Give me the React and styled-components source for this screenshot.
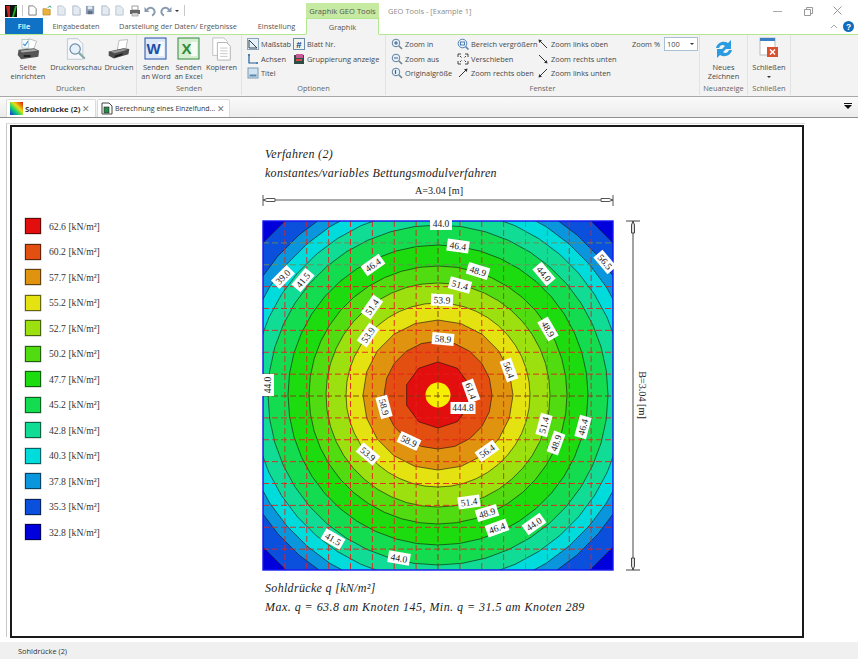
import React from "react";
import styled, { createGlobalStyle } from "styled-components";

const GlobalStyle = createGlobalStyle`
	html, body {
		margin: 0;
		padding: 0;
		background: #fff;
	}
	body {
		font-family: "Open Sans", "Liberation Sans", sans-serif;
		font-size: 7.4px;
		color: #484848;
	}
`;

const Page = styled.div`
	width: 858px;
	height: 659px;
	display: flex;
	flex-direction: column;
	overflow: hidden;
	background: #fff;
`;

/* title bar */
const TitleBar = styled.div`
	height: 18px;
	display: flex;
	align-items: stretch;
	padding-left: 5px;
`;

const QuickAccess = styled.div`
	width: 301px;
	display: flex;
	align-items: center;
	gap: 3.5px;
	padding-top: 3px;
	box-sizing: border-box;
`;

const QatSeparator = styled.span`
	width: 1px;
	height: 11px;
	margin: 0 ${p => p.$m}px;
	background: #c8c8c8;
`;

const ContextHeader = styled.div`
	width: 73px;
	margin-top: 3px;
	background: #c6eaa2;
	display: flex;
	align-items: center;
	justify-content: center;
	font-size: 7.6px;
	color: #555;
`;

const AppTitle = styled.div`
	margin-left: 9px;
	padding-top: 4px;
	width: 384px;
	display: flex;
	align-items: center;
	font-size: 7.5px;
	color: #8c8c8c;
`;

const WindowButtons = styled.div`
	display: flex;
	align-items: center;
	gap: 18px;
	padding-top: 3px;
`;

/* ribbon tabs */
const TabRow = styled.div`
	height: 16px;
	display: flex;
	align-items: stretch;
	padding-left: 5px;
	border-bottom: 1px solid #b4e88e;
	position: relative;
`;

const FileTab = styled.div`
	width: 38px;
	background: #0f72c4;
	color: #fff;
	font-weight: 600;
	display: flex;
	align-items: center;
	justify-content: center;
`;

const RibbonTab = styled.div`
	width: ${p => p.$w}px;
	display: flex;
	align-items: center;
	justify-content: center;
	color: #555;
	${p =>
		p.$active &&
		`
		background: #f3f3f3;
		border: 1px solid #b4e88e;
		border-bottom: 1px solid #f3f3f3;
		margin-bottom: -1px;
		box-sizing: border-box;
	`}
`;

const HelpArea = styled.div`
	margin-left: auto;
	display: flex;
	align-items: center;
	gap: 5px;
	padding-right: 4px;
`;

/* ribbon body */
const Ribbon = styled.div`
	height: 61px;
	background: #f3f3f3;
	display: flex;
	padding-left: 5px;
	border-bottom: 1px solid #a8a8a8;
`;

const Group = styled.div`
	width: ${p => p.$w}px;
	box-sizing: border-box;
	display: flex;
	flex-direction: column;
	border-right: 1px solid #e2e2e2;
	margin-bottom: 1px;
`;

const GroupBody = styled.div`
	flex: 1;
	display: flex;
	padding-left: ${p => p.$pl || 0}px;
	gap: ${p => p.$gap || 0}px;
`;

const GroupTitle = styled.div`
	height: 13px;
	text-align: center;
	color: #666;
	line-height: 12px;
`;

const BigButton = styled.div`
	width: ${p => p.$w}px;
	display: flex;
	flex-direction: column;
	align-items: center;
	padding-top: 2px;
	line-height: 9px;
	text-align: center;
	color: #484848;
	white-space: nowrap;
	svg {
		margin-bottom: 2px;
	}
`;

const SmallColumn = styled.div`
	width: ${p => p.$w}px;
	display: flex;
	flex-direction: column;
	padding-top: 2px;
`;

const SmallButton = styled.div`
	height: 14.5px;
	display: flex;
	align-items: center;
	gap: 2px;
	white-space: nowrap;
	color: #484848;
`;

const ZoomBox = styled.div`
	display: flex;
	align-items: flex-start;
	gap: 4px;
	padding-top: 2px;
	white-space: nowrap;
`;

const ZoomLabel = styled.span`
	line-height: 14px;
`;

const ZoomSelect = styled.div`
	width: 34px;
	height: 14px;
	box-sizing: border-box;
	border: 1px solid #a9bfd6;
	background: #fff;
	display: flex;
	align-items: center;
	justify-content: space-between;
	padding: 0 3px 0 2px;
`;

const Caret = styled.span`
	width: 0;
	height: 0;
	margin-top: ${p => p.$mt || 0}px;
	border-left: 2.5px solid transparent;
	border-right: 2.5px solid transparent;
	border-top: 2.5px solid #333;
`;

/* document tabs */
const DocTabs = styled.div`
	height: 20px;
	display: flex;
	align-items: flex-end;
	gap: 1px;
	padding-left: 6px;
	background: linear-gradient(#fafafa, #ececec);
	border-bottom: 1px solid #8f8f8f;
	position: relative;
`;

const DocTab = styled.div`
	width: ${p => p.$w}px;
	height: 18px;
	box-sizing: border-box;
	background: #fff;
	border: 1px solid #dcdcdc;
	border-bottom: none;
	border-radius: 2px 2px 0 0;
	display: flex;
	align-items: center;
	gap: 2px;
	padding-left: 3px;
	font-weight: ${p => (p.$active ? 700 : 400)};
	font-size: ${p => (p.$active ? 7.8 : 7)}px;
	color: #333;
	white-space: nowrap;
	svg {
		flex: none;
	}
`;

const CloseX = styled.span`
	margin-left: auto;
	margin-right: 6px;
	color: #777;
	font-size: 9px;
	font-weight: 400;
`;

const TabMenu = styled.div`
	position: absolute;
	right: 6px;
	top: 6px;
	width: 8px;
	border-top: 1px solid #111;
	padding-top: 1px;
	&::after {
		content: "";
		display: block;
		width: 0;
		margin: 0 auto;
		border-left: 4px solid transparent;
		border-right: 4px solid transparent;
		border-top: 4px solid #111;
	}
`;

/* document area */
const DocArea = styled.div`
	flex: 1;
	padding: 5px 0 0 6px;
	min-height: 0;
`;

const PaperEdge = styled.div`
	width: 799px;
	height: 100%;
	box-sizing: border-box;
	border-left: 1px solid #c8c8c8;
	border-top: 1px solid #dcdcdc;
	padding: 1px 0 0 3px;
`;

const Frame = styled.div`
	width: 794px;
	height: 513px;
	box-sizing: border-box;
	border: 2px solid #1a1a1a;
	display: flex;
	font-family: "Liberation Serif", serif;
	color: #222;
`;

const Legend = styled.div`
	width: 249px;
	box-sizing: border-box;
	padding: 91px 0 0 13px;
	display: flex;
	flex-direction: column;
	gap: 9.5px;
`;

const LegendRow = styled.div`
	height: 16px;
	display: flex;
	align-items: center;
	gap: 8px;
	font-size: 9.7px;
	color: #333;
`;

const Swatch = styled.span`
	width: 16px;
	height: 16px;
	box-sizing: border-box;
	background: ${p => p.$c};
	border: 1px solid rgba(0, 0, 0, 0.55);
	box-shadow: 0 0 0 0.5px #bbb;
`;

const Plot = styled.div`
	display: flex;
	flex-direction: column;
	padding-top: 18px;
`;

const PlotText = styled.div`
	font-style: italic;
	font-size: 12px;
	letter-spacing: ${p => p.$sp || 0.32}px;
	line-height: 19px;
	padding-left: 4px;
	white-space: nowrap;
`;

const ChartSvg = styled.svg`
	display: block;
	margin: 0 0 4px -10px;
`;

const StatusBar = styled.div`
	height: 17px;
	background: #f0f0f0;
	margin-top: 5px;
	padding-left: 18px;
	display: flex;
	align-items: center;
	color: #333;
`;

/* chart data */
const COLORS = [
	"#0000dc",
	"#0a50dc",
	"#0a96dc",
	"#00dcdc",
	"#10dc96",
	"#14dc50",
	"#1cdc10",
	"#50dc10",
	"#9ce010",
	"#e4e210",
	"#e0930f",
	"#e24f10",
	"#e30f0f"
];
const RADII = [232, 212, 200, 186, 170, 150, 129, 112, 92, 75, 54, 33];
const LEGEND = [
	["62.6", 12],
	["60.2", 11],
	["57.7", 10],
	["55.2", 9],
	["52.7", 8],
	["50.2", 7],
	["47.7", 6],
	["45.2", 5],
	["42.8", 4],
	["40.3", 3],
	["37.8", 2],
	["35.3", 1],
	["32.8", 0]
];

// x, y, rotation, in page coordinates
const LABELS = [
	["44.0", 440, 224, 0],
	["46.4", 457, 246, 8],
	["48.9", 477, 271, 17],
	["51.4", 459, 285, 15],
	["53.9", 441, 300, 2],
	["58.9", 442, 339, 5],
	["39.0", 282, 277, -45],
	["41.5", 302, 280, -50],
	["46.4", 372, 265, -35],
	["51.4", 371, 307, -55],
	["53.9", 367, 335, -55],
	["44.0", 543, 274, 50],
	["48.9", 547, 329, 60],
	["56.5", 604, 262, 50],
	["56.4", 508, 370, 70],
	["44.0", 267, 385, -90],
	["58.9", 383, 407, 75],
	["58.9", 408, 441, 25],
	["53.9", 367, 454, 40],
	["41.5", 332, 539, 30],
	["44.0", 398, 558, 10],
	["61.4", 470, 391, 70],
	["444.8", 462, 408, 0],
	["56.4", 486, 451, -35],
	["51.4", 543, 425, -75],
	["48.9", 555, 443, -70],
	["46.4", 582, 427, -75],
	["51.4", 468, 502, -8],
	["48.9", 486, 513, -17],
	["46.4", 496, 528, -20],
	["44.0", 533, 524, -35]
];

const OX = 250;
const OY = 183;
const CX = 437 - OX;
const CY = 395 - OY;

function ring(r) {
	const n = r === 33 ? 10 : r < 80 ? 20 : 44;
	const pts = [];
	for (let i = 0; i < n; i++) {
		const a = (i / n) * Math.PI * 2 - Math.PI / 2;
		pts.push(`${(CX + r * Math.cos(a)).toFixed(1)},${(CY + r * Math.sin(a)).toFixed(1)}`);
	}
	return pts.join(" ");
}

function Chart() {
	const L = 262 - OX;
	const T = 221 - OY;
	const W = 350;
	const H = 349;
	const step = W / 16;
	const lines = Array.from({ length: 15 }, (_, i) => i + 1);
	const greyH = [1, 2];
	const greyV = [12, 13];

	return (
		<ChartSvg width="400" height="392" viewBox="0 0 400 392">
			<defs>
				<clipPath id="plotClip">
					<rect x={L} y={T} width={W} height={H} />
				</clipPath>
			</defs>

			{/* A dimension */}
			<g stroke="#555" fill="none">
				<line x1={L} y1="17" x2={L + W} y2="17" />
				<line x1={L} y1="12" x2={L} y2="23" />
				<line x1={L + W} y1="12" x2={L + W} y2="23" />
				<path d={`M${L} 17l4 -1.5h8v3h-8z`} fill="#fff" />
				<path d={`M${L + W} 17l-4 -1.5h-8v3h8z`} fill="#fff" />
			</g>
			<text x="188" y="10.5" textAnchor="middle" fontSize="10.2" fill="#222" fontFamily="Liberation Serif">
				A=3.04 [m]
			</text>

			{/* contour bands */}
			<g clipPath="url(#plotClip)">
				<rect x={L} y={T} width={W} height={H} fill={COLORS[0]} />
				{RADII.map((r, i) => (
					<polygon key={r} points={ring(r)} fill={COLORS[i + 1]} stroke="#111" strokeWidth="0.6" />
				))}
				<circle cx={CX} cy={CY} r="12.5" fill="#f6f000" />
				{lines.map(i => (
					<line
						key={"v" + i}
						x1={L + i * step}
						y1={T}
						x2={L + i * step}
						y2={T + H}
						stroke={i === 8 ? "#7a3a10" : greyV.includes(i) ? "#6d8a55" : "#e4201c"}
						strokeWidth="0.9"
						strokeDasharray="6 3"
					/>
				))}
				{lines.map(i => (
					<line
						key={"h" + i}
						x1={L}
						y1={T + i * step}
						x2={L + W}
						y2={T + i * step}
						stroke={i === 8 ? "#7a3a10" : greyH.includes(i) ? "#6d8a55" : "#e4201c"}
						strokeWidth="0.9"
						strokeDasharray="6 3"
					/>
				))}
			</g>
			<rect x={L} y={T} width={W} height={H} fill="none" stroke="#1414f0" strokeWidth="1.4" />

			{/* B dimension */}
			<g stroke="#444" fill="none">
				<line x1="382" y1={T} x2="382" y2={T + H} />
				<line x1="375" y1={T} x2="389" y2={T} />
				<line x1="375" y1={T + H} x2="389" y2={T + H} />
				<path d={`M382 ${T}l-1.5 4v8h3v-8z`} fill="#ddd" />
				<path d={`M382 ${T + H}l-1.5 -4v-8h3v8z`} fill="#ddd" />
			</g>
			<text
				transform={`translate(388 ${CY}) rotate(90)`}
				textAnchor="middle"
				fontSize="10.2"
				fill="#222"
				fontFamily="Liberation Serif"
			>
				B=3.04 [m]
			</text>

			{/* value labels */}
			{LABELS.map(([t, x, y, rot], i) => (
				<g key={i} transform={`translate(${x - OX} ${y - OY}) rotate(${rot})`}>
					<rect x={t.length > 4 ? -12.5 : -11} y="-6" width={t.length > 4 ? 25 : 22} height="12" fill="#fff" />
					<text y="3.3" textAnchor="middle" fontSize="9.5" fill="#222" fontFamily="Liberation Serif">
						{t}
					</text>
				</g>
			))}
		</ChartSvg>
	);
}

/* ribbon icons */
const Ico = ({ s = 12, vb = 12, children }) => (
	<svg width={s} height={s} viewBox={`0 0 ${vb} ${vb}`} style={{ flex: "none" }}>
		{children}
	</svg>
);

const Logo = () => (
	<Ico s={12}>
		<rect width="12" height="12" fill="#111" />
		<path d="M1 1h4v11H3z" fill="#c22" />
		<path d="M7 12l3 -11h2L9 12z" fill="#2a2" />
	</Ico>
);

const QatDoc = ({ c = "#b8c6d4", f = "#e4eaf0" }) => (
	<Ico s={11}>
		<path d="M2 1h5l3 3v7H2z" fill={f} stroke={c} />
	</Ico>
);
const QatOpen = () => (
	<Ico s={11}>
		<path d="M1 4h4l1 1h3v6H1z" fill="#e8b23c" stroke="#b07a18" strokeWidth=".6" />
		<path d="M6 3l3 -2 1 2" fill="none" stroke="#3a7" />
	</Ico>
);
const QatSave = () => (
	<Ico s={11}>
		<rect x="1" y="1" width="9" height="9" fill="#8fa0b8" />
		<rect x="3" y="1.5" width="5" height="3" fill="#e8edf3" />
		<rect x="3" y="6.5" width="5" height="3.5" fill="#5d7088" />
	</Ico>
);
const QatPrint = () => (
	<Ico s={12}>
		<rect x="3" y="1" width="6" height="4" fill="#fff" stroke="#777" strokeWidth=".7" />
		<rect x="1" y="5" width="10" height="4" fill="#666" />
		<rect x="3" y="8" width="6" height="3" fill="#ddd" stroke="#777" strokeWidth=".5" />
	</Ico>
);
const QatUndo = ({ flip }) => (
	<Ico s={12}>
		<g transform={flip ? "translate(12 0) scale(-1 1)" : undefined}>
			<path d="M3 5a4 4 0 1 1 5 5.5" fill="none" stroke="#8a9bb0" strokeWidth="2" />
			<path d="M0.5 2v5h5z" fill="#8a9bb0" />
		</g>
	</Ico>
);

const IconPrintCheck = () => (
	<Ico s={24} vb={28}>
		<path d="M15 2l9 3-4 11-9-3z" fill="#fff" stroke="#999" strokeWidth=".7" />
		<rect x="7" y="3" width="8" height="10" fill="#f4f8fd" stroke="#8aa" strokeWidth=".6" />
		<path d="M8.5 8l2 2 3.5-5" fill="none" stroke="#2a7fd0" strokeWidth="1.2" />
		<path d="M3 15l18 -2 6 3-1 7-20 3-4-5z" fill="#555" />
		<path d="M5 16l16 -2 4 2-18 2z" fill="#aaa" />
		<rect x="9" y="21" width="8" height="2.4" fill="#222" />
	</Ico>
);
const IconPreview = () => (
	<Ico s={24} vb={28}>
		<path d="M4 2h12l6 6v18H4z" fill="#f6f8fb" stroke="#a9b8c8" strokeWidth=".8" />
		<circle cx="13" cy="14" r="6" fill="#e6f1fb" stroke="#6f8ba8" strokeWidth="1.4" />
		<path d="M17.5 18.5l6 6" stroke="#8aa" strokeWidth="2.6" strokeLinecap="round" />
	</Ico>
);
const IconPrinter = () => (
	<Ico s={24} vb={28}>
		<path d="M14 4l10 -1-2 11-10 1z" fill="#fff" stroke="#999" strokeWidth=".7" />
		<path d="M2 17l17 -4 7 1-1 6-17 5-6-3z" fill="#4d4d4d" />
		<path d="M4 17l15 -3 5 1-15 4z" fill="#9a9a9a" />
		<path d="M9 22l9 -3v2l-9 3z" fill="#1c1c1c" />
	</Ico>
);
const IconOffice = ({ c, bg, letter }) => (
	<Ico s={24} vb={24}>
		<rect x="1" y="1" width="21" height="21" fill={bg} stroke={c} strokeWidth="1" />
		<path d="M14 5h6v14h-6z" fill="#fff" opacity=".75" />
		<text x="9.5" y="17" textAnchor="middle" fontSize="15" fontWeight="700" fill={c} fontFamily="Liberation Sans">
			{letter}
		</text>
	</Ico>
);
const IconCopy = () => (
	<Ico s={24} vb={26}>
		<path d="M3 1h12l4 4v15H3z" fill="#fff" stroke="#c0c0c0" />
		<path d="M8 6h10l4 4v15H8z" fill="#fff" stroke="#b0b0b0" />
		<path d="M11 12h8M11 15h8M11 18h8M11 21h8" stroke="#c4c4c4" />
	</Ico>
);
const IconRefresh = () => (
	<Ico s={24} vb={24}>
		<path d="M4 11c1-5 7-8 12-5l3-3v9h-9l3-3c-2-2-5-1-6 2z" fill="#2a9be0" />
		<path d="M20 13c-1 5-7 8-12 5l-3 3v-9h9l-3 3c2 2 5 1 6-2z" fill="#2a9be0" />
	</Ico>
);
const IconClose = () => (
	<Ico s={24} vb={24}>
		<rect x="3" y="1" width="15" height="17" fill="#fff" stroke="#bbb" />
		<rect x="3" y="1" width="15" height="3" fill="#3a7fc4" />
		<rect x="10" y="10" width="11" height="10" fill="#d9502e" />
		<path d="M13 12.500l5 5M18 12.500l-5 5" stroke="#fff" strokeWidth="1.5" />
	</Ico>
);

const IconRuler = () => (
	<Ico>
		<rect x=".5" y=".5" width="11" height="11" fill="#e6f0f7" stroke="#8aa3b8" />
		<path d="M2 2v8h8z" fill="none" stroke="#345" />
	</Ico>
);
const IconAxes = () => (
	<Ico>
		<path d="M2 1v9h9" fill="none" stroke="#1f5c99" strokeWidth="1.2" />
		<path d="M1 2h2M10 9v2" stroke="#1f5c99" />
	</Ico>
);
const IconTitle = () => (
	<Ico>
		<rect x="1" y="1" width="10" height="10" fill="#cfe3f2" stroke="#7f99b0" />
		<rect x="2.500" y="7.500" width="7" height="2" fill="#5a86ad" />
	</Ico>
);
const IconHash = () => (
	<Ico>
		<rect x=".5" y=".5" width="11" height="11" fill="#eef6ee" stroke="#6c8ab0" />
		<text x="6" y="9.500" textAnchor="middle" fontSize="9.5" fontWeight="700" fill="#23317a" fontFamily="Liberation Sans">
			#
		</text>
	</Ico>
);
const IconGroup = () => (
	<Ico>
		<rect x="1" y="2" width="10" height="9" fill="#2d4d46" />
		<rect x="3" y="1" width="7" height="4" fill="#c85a9a" />
		<rect x="3" y="6" width="6" height="2" fill="#d84a4a" />
	</Ico>
);
const IconMagnify = ({ sign }) => (
	<Ico>
		<circle cx="5" cy="5" r="3.8" fill="#eaf3fb" stroke="#5f7f9f" strokeWidth="1" />
		<path d="M8 8l3 3" stroke="#6b7f90" strokeWidth="1.6" />
		{sign !== "o" && <path d="M3 5h4" stroke="#38618a" />}
		{sign === "+" && <path d="M5 3v4" stroke="#38618a" />}
		{sign === "o" && <path d="M4.500 3v4" stroke="#38618a" strokeWidth="1.2" />}
	</Ico>
);
const IconArea = () => (
	<Ico>
		<circle cx="5.500" cy="5.500" r="4.300" fill="#eaf3fb" stroke="#4f7fb5" strokeWidth="1" />
		<rect x="3.500" y="4" width="4" height="3" fill="none" stroke="#2f62a0" strokeWidth=".8" />
		<path d="M8.500 8.500l3 3" stroke="#4f7fb5" strokeWidth="1.5" />
	</Ico>
);
const IconMove = () => (
	<Ico>
		<path d="M1 4V1h3M8 1h3v3M11 8v3H8M4 11H1V8" fill="none" stroke="#444" />
		<path d="M3 3l1.500 1.500M9 3L7.500 4.500M9 9L7.500 7.500M3 9l1.500 -1.500" stroke="#444" />
	</Ico>
);
const Arrow = ({ a }) => (
	<Ico>
		<g transform={`rotate(${a} 6 6)`}>
			<path d="M2 10L10 2" stroke="#333" />
			<path d="M10.500 1.500l-3.500 .7 2.800 2.800z" fill="#333" />
		</g>
	</Ico>
);

export default function App() {
	return (
		<Page>
			<GlobalStyle />
			<TitleBar>
				<QuickAccess>
					<Logo />
					<QatSeparator $m={1} />
					<QatDoc c="#777" f="#fff" />
					<QatOpen />
					<QatDoc />
					<QatDoc c="#a9b8c8" />
					<QatSave />
					<QatDoc c="#a9b8c8" />
					<QatDoc />
					<QatPrint />
					<QatUndo />
					<QatUndo flip />
					<Caret />
					<QatSeparator $m={1} />
				</QuickAccess>
				<ContextHeader>Graphik GEO Tools</ContextHeader>
				<AppTitle>GEO Tools - [Example 1]</AppTitle>
				<WindowButtons>
					<svg width="12" height="12" viewBox="0 0 12 12">
						<path d="M1 6.500h9" stroke="#aaa" />
					</svg>
					<svg width="12" height="12" viewBox="0 0 12 12">
						<path d="M2.500 4.500h6v6h-6zM4.500 4.500v-2h6v6h-2" fill="none" stroke="#999" />
					</svg>
					<svg width="12" height="12" viewBox="0 0 12 12">
						<path d="M1.500 1.500l8 8M9.500 1.500l-8 8" stroke="#999" />
					</svg>
				</WindowButtons>
			</TitleBar>

			<TabRow>
				<FileTab>File</FileTab>
				<RibbonTab $w={66}>Eingabedaten</RibbonTab>
				<RibbonTab $w={138}>Darstellung der Daten/ Ergebnisse</RibbonTab>
				<RibbonTab $w={59}>Einstellung</RibbonTab>
				<RibbonTab $w={73} $active>
					Graphik
				</RibbonTab>
				<HelpArea>
					<svg width="8" height="6" viewBox="0 0 8 6">
						<path d="M1 5l3 -3 3 3" fill="none" stroke="#aaa" />
					</svg>
					<svg width="11" height="11" viewBox="0 0 11 11">
						<circle cx="5.500" cy="5.500" r="5.500" fill="#0f6cbd" />
						<text x="5.500" y="8.500" textAnchor="middle" fontSize="8.500" fontWeight="700" fill="#fff" fontFamily="Liberation Sans">
							?
						</text>
					</svg>
				</HelpArea>
			</TabRow>

			<Ribbon>
				<Group $w={132}>
					<GroupBody $pl={1}>
						<BigButton $w={44}>
							<IconPrintCheck />
							Seite
							<br />
							einrichten
						</BigButton>
						<BigButton $w={52}>
							<IconPreview />
							Druckvorschau
						</BigButton>
						<BigButton $w={34}>
							<IconPrinter />
							Drucken
						</BigButton>
					</GroupBody>
					<GroupTitle>Drucken</GroupTitle>
				</Group>
				<Group $w={105}>
					<GroupBody $pl={3}>
						<BigButton $w={32}>
							<IconOffice c="#1c4fa8" bg="#dfe9f7" letter="W" />
							Senden
							<br />
							an Word
						</BigButton>
						<BigButton $w={33}>
							<IconOffice c="#2f8a3a" bg="#d8efd6" letter="X" />
							Senden
							<br />
							an Excel
						</BigButton>
						<BigButton $w={33}>
							<IconCopy />
							Kopieren
						</BigButton>
					</GroupBody>
					<GroupTitle>Senden</GroupTitle>
				</Group>
				<Group $w={144}>
					<GroupBody $pl={5}>
						<SmallColumn $w={46}>
							<SmallButton>
								<IconRuler />
								Maßstab
							</SmallButton>
							<SmallButton>
								<IconAxes />
								Achsen
							</SmallButton>
							<SmallButton>
								<IconTitle />
								Titel
							</SmallButton>
						</SmallColumn>
						<SmallColumn $w={90}>
							<SmallButton>
								<IconHash />
								Blatt Nr.
							</SmallButton>
							<SmallButton>
								<IconGroup />
								Gruppierung anzeige
							</SmallButton>
						</SmallColumn>
					</GroupBody>
					<GroupTitle>Optionen</GroupTitle>
				</Group>
				<Group $w={314}>
					<GroupBody $pl={5}>
						<SmallColumn $w={66}>
							<SmallButton>
								<IconMagnify sign="+" />
								Zoom in
							</SmallButton>
							<SmallButton>
								<IconMagnify sign="-" />
								Zoom aus
							</SmallButton>
							<SmallButton>
								<IconMagnify sign="o" />
								Originalgröße
							</SmallButton>
						</SmallColumn>
						<SmallColumn $w={80}>
							<SmallButton>
								<IconArea />
								Bereich vergrößern
							</SmallButton>
							<SmallButton>
								<IconMove />
								Verschieben
							</SmallButton>
							<SmallButton>
								<Arrow a={0} />
								Zoom rechts oben
							</SmallButton>
						</SmallColumn>
						<SmallColumn $w={95}>
							<SmallButton>
								<Arrow a={-90} />
								Zoom links oben
							</SmallButton>
							<SmallButton>
								<Arrow a={90} />
								Zoom rechts unten
							</SmallButton>
							<SmallButton>
								<Arrow a={180} />
								Zoom links unten
							</SmallButton>
						</SmallColumn>
						<ZoomBox>
							<ZoomLabel>Zoom %</ZoomLabel>
							<ZoomSelect>
								100
								<Caret />
							</ZoomSelect>
						</ZoomBox>
					</GroupBody>
					<GroupTitle>Fenster</GroupTitle>
				</Group>
				<Group $w={48}>
					<GroupBody>
						<BigButton $w={47}>
							<IconRefresh />
							Neues
							<br />
							Zeichnen
						</BigButton>
					</GroupBody>
					<GroupTitle>Neuanzeige</GroupTitle>
				</Group>
				<Group $w={43}>
					<GroupBody>
						<BigButton $w={42}>
							<IconClose />
							Schließen
							<Caret $mt={4} />
						</BigButton>
					</GroupBody>
					<GroupTitle>Schließen</GroupTitle>
				</Group>
			</Ribbon>

			<DocTabs>
				<DocTab $w={90} $active>
					<svg width="13" height="13" viewBox="0 0 13 13">
						<defs>
							<linearGradient id="rainbow" x1="0" y1="1" x2="1" y2="0">
								<stop offset="0" stopColor="#1030e0" />
								<stop offset=".35" stopColor="#10d070" />
								<stop offset=".6" stopColor="#e8e010" />
								<stop offset="1" stopColor="#e01010" />
							</linearGradient>
						</defs>
						<rect width="13" height="13" fill="url(#rainbow)" />
					</svg>
					Sohldrücke (2)
					<CloseX>✕</CloseX>
				</DocTab>
				<DocTab $w={133}>
					<svg width="12" height="13" viewBox="0 0 12 13">
						<path d="M1 1h7l3 3v8H1z" fill="#fff" stroke="#444" />
						<rect x="3" y="5" width="5" height="6" fill="#2a8a4a" stroke="#222" strokeWidth=".6" />
					</svg>
					Berechnung eines Einzelfund...
					<CloseX>✕</CloseX>
				</DocTab>
				<TabMenu />
			</DocTabs>

			<DocArea>
				<PaperEdge>
					<Frame>
						<Legend>
							{LEGEND.map(([v, c]) => (
								<LegendRow key={v}>
									<Swatch $c={COLORS[c]} />
									{v} [kN/m²]
								</LegendRow>
							))}
						</Legend>
						<Plot>
							<PlotText>Verfahren (2)</PlotText>
							<PlotText $sp={0.28}>konstantes/variables Bettungsmodulverfahren</PlotText>
							<Chart />
							<PlotText>Sohldrücke q [kN/m²]</PlotText>
							<PlotText $sp={0.47}>Max. q = 63.8 am Knoten 145, Min. q = 31.5 am Knoten 289</PlotText>
						</Plot>
					</Frame>
				</PaperEdge>
			</DocArea>

			<StatusBar>Sohldrücke (2)</StatusBar>
		</Page>
	);
}
